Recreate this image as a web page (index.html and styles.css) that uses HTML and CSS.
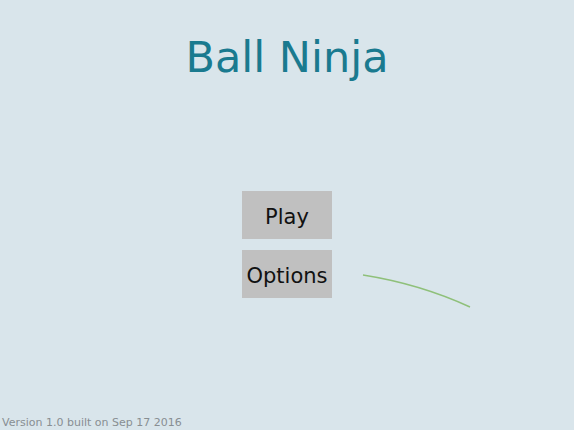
FILE: index.html
```html
<!DOCTYPE html>
<html>
<head>
<meta charset="utf-8">
<link rel="stylesheet" href="styles.css">
</head>
<body>
<div class="screen">
  <h1 class="title">Ball Ninja</h1>
  <div class="menu">
    <div class="btn">Play</div>
    <div class="btn">Options</div>
  </div>
  <div class="footer">Version 1.0 built on Sep 17 2016</div>
  <svg class="trail" width="574" height="430" viewBox="0 0 574 430">
    <path d="M363 275 Q420 284 470 307" fill="none" stroke="#8fc07a" stroke-width="1.5"/>
  </svg>
</div>
</body>
</html>
```
FILE: styles.css
```css
html, body {
  margin: 0;
  padding: 0;
}
body {
  background: #d9e5eb;
  font-family: "DejaVu Sans", sans-serif;
}
.screen {
  position: relative;
  width: 574px;
  height: 430px;
  display: flex;
  flex-direction: column;
  align-items: center;
  overflow: hidden;
}
.title {
  margin: 31px 0 0 0;
  font-weight: normal;
  font-size: 43px;
  line-height: 52px;
  color: #1a7a8f;
}
.menu {
  margin-top: 108px;
  display: flex;
  flex-direction: column;
  align-items: center;
  gap: 11px;
}
.btn {
  width: 90px;
  height: 48px;
  box-sizing: border-box;
  padding-top: 3px;
  background: #c0c0c0;
  color: #111;
  font-size: 21px;
  display: flex;
  align-items: center;
  justify-content: center;
}
.footer {
  margin-top: auto;
  align-self: flex-start;
  padding: 0 0 1px 2px;
  font-size: 11px;
  color: #888e92;
}
.trail {
  position: absolute;
  left: 0;
  top: 0;
  pointer-events: none;
}
```
